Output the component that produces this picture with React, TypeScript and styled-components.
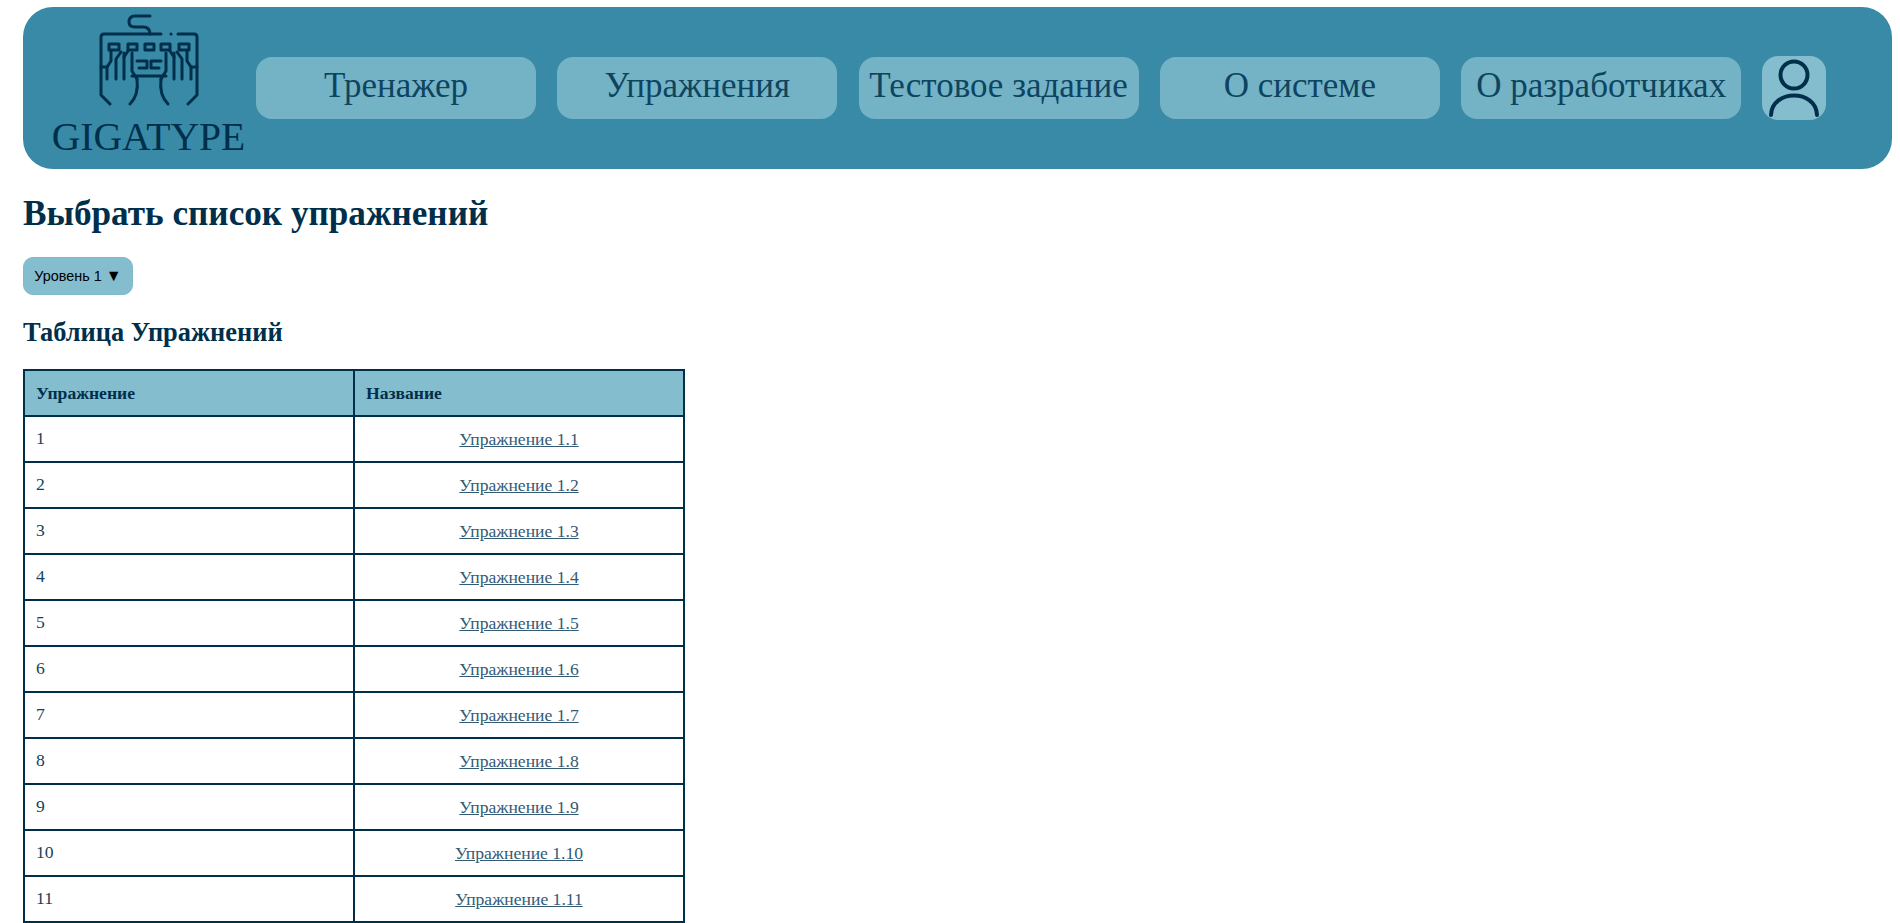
import React from "react";
import styled, { createGlobalStyle } from "styled-components";

const GlobalStyle = createGlobalStyle`
  html, body {
    margin: 0;
    background: #fff;
    font-family: "Liberation Serif", "Times New Roman", serif;
    color: #002f4b;
  }
`;

const navItems = [
  "Тренажер",
  "Упражнения",
  "Тестовое задание",
  "О системе",
  "О разработчиках",
];

const rows = Array.from({ length: 15 }, (_, i) => i + 1);

// left half of the keyboard and hands, the right half is its mirror
const LogoHalf: React.FC = () => (
  <>
    <path d="M101 68 V96 L110 105 M101 68 H107 V80" />
    <rect x="109" y="45" width="10" height="6" />
    <rect x="128" y="45" width="9" height="6" />
    <path d="M116 80 V60 L121 53 M124 80 V54 M132 54 V72 L137 80" />
    <path d="M128 52 L124 58 M111 52 V62 M107 68 L111 62" />
    <path d="M137 62 H147 V69 H139" />
    <path d="M137 80 Q139 96 130 105" />
  </>
);

const Logo: React.FC = () => (
  <LogoSvg viewBox="98 14 102 94">
    <g fill="none" stroke="#002f4b" strokeWidth="3" strokeLinecap="round" strokeLinejoin="round">
      <path d="M150 35 Q150 28 143 28 H135 Q129 28 129 23 Q129 17 135 17 H150" />
      <path d="M101 68 V38 Q101 35 104 35 H161" />
      <path d="M178 35 H194 Q197 35 197 38 V68" />
      <LogoHalf />
      <g transform="translate(298 0) scale(-1 1)">
        <LogoHalf />
      </g>
      <rect x="145" y="45" width="9" height="6" />
      <path d="M132 77 H166" />
    </g>
    <circle cx="171" cy="35" r="1.6" fill="#002f4b" />
  </LogoSvg>
);

const App: React.FC = () => (
  <>
    <GlobalStyle />
    <Page>
      <Header>
        <LogoBlock>
          <Logo />
          <LogoText>GIGATYPE</LogoText>
        </LogoBlock>
        <Nav>
          {navItems.map((item) => (
            <NavButton key={item}>{item}</NavButton>
          ))}
          <ProfileButton aria-label="Профиль">
            <svg viewBox="0 0 64 64" width="64" height="64" fill="none" stroke="#002f4b" strokeWidth="4" strokeLinecap="round">
              <circle cx="32" cy="19" r="13.5" />
              <path d="M9 59 C10 33 54 33 55 59" />
            </svg>
          </ProfileButton>
        </Nav>
      </Header>
      <Title>Выбрать список упражнений</Title>
      <LevelButton>
        Уровень 1 <Arrow>▼</Arrow>
      </LevelButton>
      <Subtitle>Таблица Упражнений</Subtitle>
      <Table>
        <thead>
          <tr>
            <Th>Упражнение</Th>
            <Th>Название</Th>
          </tr>
        </thead>
        <tbody>
          {rows.map((n) => (
            <tr key={n}>
              <Td>{n}</Td>
              <LinkCell>
                <ExerciseLink href="#">Упражнение 1.{n}</ExerciseLink>
              </LinkCell>
            </tr>
          ))}
        </tbody>
      </Table>
    </Page>
  </>
);

export default App;

const Page = styled.div`
  padding: 7px 8px 20px 23px;
`;

const Header = styled.header`
  display: flex;
  align-items: center;
  height: 162px;
  padding-left: 29px;
  background-color: #388aa6;
  border-radius: 30px;
`;

const LogoBlock = styled.div`
  display: flex;
  flex-direction: column;
  align-items: center;
  width: 193px;
`;

const LogoSvg = styled.svg`
  width: 102px;
  height: 94px;
  margin-top: -3px;
`;

const LogoText = styled.div`
  font-size: 39.6px;
  line-height: 46px;
  margin-top: 7px;
  color: #002f4b;
`;

const Nav = styled.nav`
  display: flex;
  align-items: center;
  gap: 21.3px;
  margin-left: 11px;
`;

const NavButton = styled.button`
  width: 280px;
  height: 62px;
  padding: 0 0 4px;
  border: none;
  border-radius: 16px;
  background-color: #74b3c6;
  color: #0f4460;
  font-family: "Liberation Serif", serif;
  font-size: 35px;
  white-space: nowrap;
`;

const ProfileButton = styled.button`
  display: flex;
  align-items: center;
  justify-content: center;
  width: 64px;
  height: 64px;
  padding: 0;
  border: none;
  border-radius: 16px;
  background-color: #84bdcd;
`;

const Title = styled.h1`
  margin: 25px 0 23px;
  font-size: 35.2px;
  line-height: 40px;
  font-weight: bold;
`;

const LevelButton = styled.button`
  display: block;
  width: 110px;
  height: 38px;
  padding: 0;
  border: 1px solid #7fb9ca;
  border-radius: 10px;
  background-color: #84bdcd;
  color: #000;
  font-family: "Liberation Sans", Arial, sans-serif;
  font-size: 14.4px;
`;

const Arrow = styled.span`
  font-size: 16px;
`;

const Subtitle = styled.h2`
  margin: 22px 0 22px;
  font-size: 26.4px;
  line-height: 30px;
  font-weight: bold;
`;

const Table = styled.table`
  width: 662px;
  table-layout: fixed;
  border-collapse: collapse;
  font-size: 17.6px;
`;

const Th = styled.th`
  height: 44px;
  padding: 0 11px;
  border: 2px solid #002f4b;
  background-color: #84bdcd;
  text-align: left;
`;

const Td = styled.td`
  height: 42px;
  padding: 0 11px 2px;
  border: 2px solid #002f4b;
  color: #173f5b;
`;

const LinkCell = styled(Td)`
  padding: 0 11px;
  text-align: center;
`;

const ExerciseLink = styled.a`
  color: #335a75;
`;
